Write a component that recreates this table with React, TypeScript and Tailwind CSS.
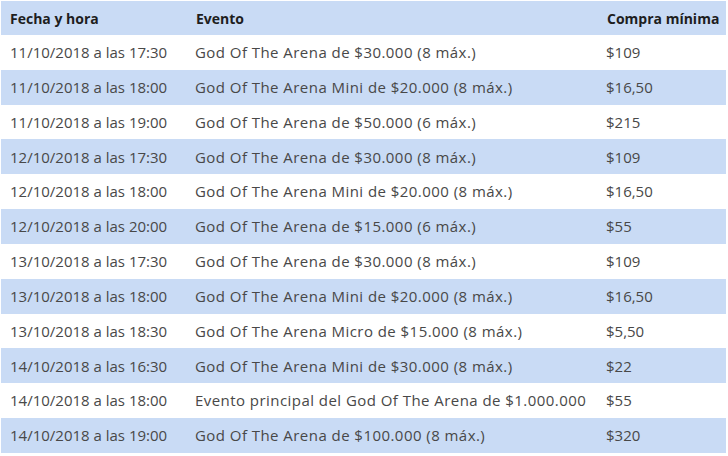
import React from "react";

const rows: [string, string, string][] = [
  ["11/10/2018 a las 17:30", "God Of The Arena de $30.000 (8 máx.)", "$109"],
  ["11/10/2018 a las 18:00", "God Of The Arena Mini de $20.000 (8 máx.)", "$16,50"],
  ["11/10/2018 a las 19:00", "God Of The Arena de $50.000 (6 máx.)", "$215"],
  ["12/10/2018 a las 17:30", "God Of The Arena de $30.000 (8 máx.)", "$109"],
  ["12/10/2018 a las 18:00", "God Of The Arena Mini de $20.000 (8 máx.)", "$16,50"],
  ["12/10/2018 a las 20:00", "God Of The Arena de $15.000 (6 máx.)", "$55"],
  ["13/10/2018 a las 17:30", "God Of The Arena de $30.000 (8 máx.)", "$109"],
  ["13/10/2018 a las 18:00", "God Of The Arena Mini de $20.000 (8 máx.)", "$16,50"],
  ["13/10/2018 a las 18:30", "God Of The Arena Micro de $15.000 (8 máx.)", "$5,50"],
  ["14/10/2018 a las 16:30", "God Of The Arena Mini de $30.000 (8 máx.)", "$22"],
  ["14/10/2018 a las 18:00", "Evento principal del God Of The Arena de $1.000.000", "$55"],
  ["14/10/2018 a las 19:00", "God Of The Arena de $100.000 (8 máx.)", "$320"],
];

export default function App() {
  return (
    <div
      className="w-[728px] h-[456px] bg-white pt-[1px] pl-[1px]"
      style={{ fontFamily: '"Open Sans", "Liberation Sans", sans-serif' }}
    >
      <div className="w-[725px] flex flex-col">
        <div className="grid grid-cols-[186px_406px_1fr] h-[34px] items-center bg-[#c9dbf5] text-[14px] font-bold text-[#1e1e1e]">
          <div className="pl-[9px]">Fecha y hora</div>
          <div className="pl-[9px]">Evento</div>
          <div className="pl-[14px] whitespace-nowrap">Compra mínima</div>
        </div>
        {rows.map((r, i) => (
          <div
            key={i}
            className={
              "grid grid-cols-[186px_406px_1fr] h-[34.83px] items-center text-[15px] text-[#484848] " +
              (i % 2 === 1 ? "bg-[#c9dbf5]" : "bg-white")
            }
          >
            <div className="pl-[9px] whitespace-nowrap">{r[0]}</div>
            <div className="pl-[8px] whitespace-nowrap tracking-[0.45px]">{r[1]}</div>
            <div className="pl-[13px] whitespace-nowrap">{r[2]}</div>
          </div>
        ))}
      </div>
    </div>
  );
}
